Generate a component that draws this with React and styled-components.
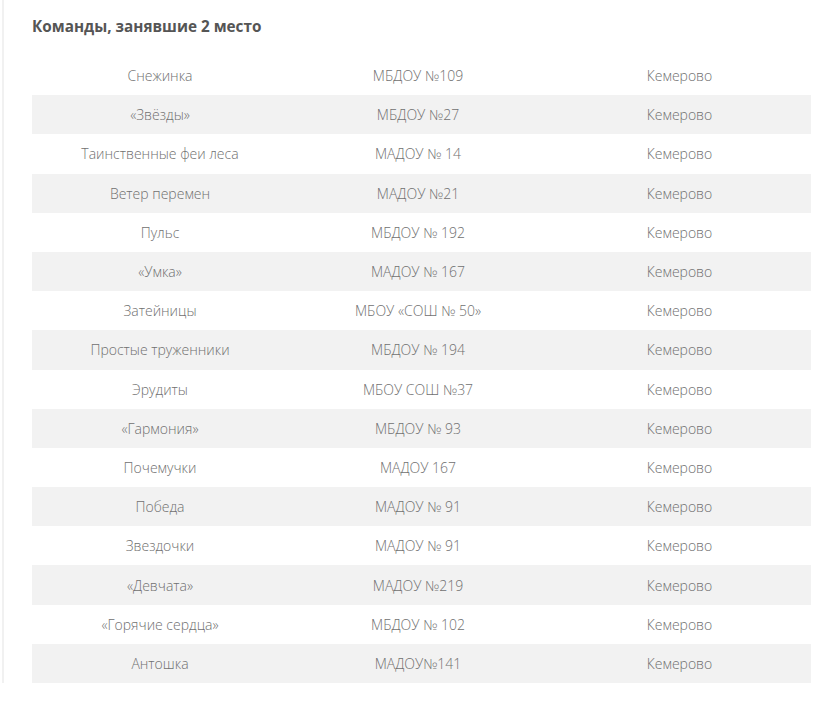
import styled, { createGlobalStyle } from "styled-components";

const GlobalStyle = createGlobalStyle`
  html, body {
    margin: 0;
    padding: 0;
    background: #ffffff;
  }
  body {
    font-family: "Open Sans", "Liberation Sans", sans-serif;
  }
`;

const Page = styled.div`
  width: 840px;
  height: 720px;
  box-sizing: border-box;
  padding-left: 2px;
`;

const Panel = styled.section`
  height: 683px;
  box-sizing: border-box;
  border-left: 2px solid #f1f1f1;
  padding: 13px 0 0 28px;
`;

const Title = styled.h3`
  margin: 0 0 17px 0;
  font-size: 15.3px;
  line-height: 26px;
  font-weight: 700;
  color: #555555;
`;

const Table = styled.div`
  width: 779px;
`;

const Row = styled.div`
  display: grid;
  grid-template-columns: 256px 260px 263px;
  height: 39.2px;
  align-items: center;
  background: ${(p) => (p.$striped ? "#f2f2f2" : "#ffffff")};
`;

const Cell = styled.div`
  text-align: center;
  font-size: 14px;
  font-weight: 300;
  color: #707070;
  white-space: nowrap;
`;

const teams = [
  ["Снежинка", "МБДОУ №109"],
  ["«Звёзды»", "МБДОУ №27"],
  ["Таинственные феи леса", "МАДОУ № 14"],
  ["Ветер перемен", "МАДОУ №21"],
  ["Пульс", "МБДОУ № 192"],
  ["«Умка»", "МАДОУ № 167"],
  ["Затейницы", "МБОУ «СОШ № 50»"],
  ["Простые труженники", "МБДОУ № 194"],
  ["Эрудиты", "МБОУ СОШ №37"],
  ["«Гармония»", "МБДОУ № 93"],
  ["Почемучки", "МАДОУ 167"],
  ["Победа", "МАДОУ № 91"],
  ["Звездочки", "МАДОУ № 91"],
  ["«Девчата»", "МАДОУ №219"],
  ["«Горячие сердца»", "МБДОУ № 102"],
  ["Антошка", "МАДОУ№141"],
];

export default function App() {
  return (
    <Page>
      <GlobalStyle />
      <Panel>
        <Title>Команды, занявшие 2 место</Title>
        <Table>
          {teams.map(([name, school], i) => (
            <Row key={`${name}_${i}`} $striped={i % 2 === 1}>
              <Cell>{name}</Cell>
              <Cell>{school}</Cell>
              <Cell>Кемерово</Cell>
            </Row>
          ))}
        </Table>
      </Panel>
    </Page>
  );
}
